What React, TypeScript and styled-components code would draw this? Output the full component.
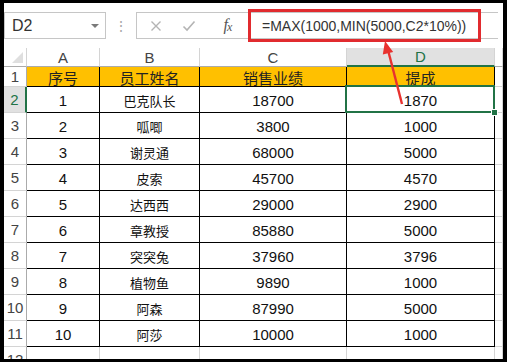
import React from "react";
import styled, { createGlobalStyle, css } from "styled-components";

const GlobalStyle = createGlobalStyle`
  html, body {
    margin: 0;
    padding: 0;
    background: #ffffff;
  }
  body {
    font-family: "Liberation Sans", "Noto Sans CJK SC", sans-serif;
  }
`;

const GREEN = "#217346";
const CJK = `"Noto Sans CJK SC", "Liberation Sans", sans-serif`;

const Frame = styled.div`
  position: relative;
  width: 507px;
  height: 362px;
  box-sizing: border-box;
  border-style: solid;
  border-color: #000;
  border-width: 3px 4px 3px 4px;
  background: #fff;
  overflow: hidden;
`;

const FormulaBar = styled.div`
  display: flex;
  align-items: center;
  height: 45px;
`;

const NameBox = styled.div`
  display: flex;
  align-items: center;
  justify-content: space-between;
  width: 102px;
  height: 27px;
  box-sizing: border-box;
  border: 1px solid #c6c6c6;
  padding: 0 6px 0 7px;
  font-size: 16px;
  color: #333;
`;

const Caret = styled.span`
  width: 0;
  height: 0;
  border-left: 4px solid transparent;
  border-right: 4px solid transparent;
  border-top: 4px solid #7a7a7a;
`;

const Dots = styled.span`
  width: 30px;
  text-align: center;
  font-size: 14px;
  color: #a8a8a8;
`;

const FormulaBox = styled.div`
  display: flex;
  align-items: center;
  width: 362px;
  height: 27px;
  box-sizing: border-box;
  border: 1px solid #c6c6c6;
  border-right: none;
  padding-left: 2px;
`;

const IconSlot = styled.span<{ $gap?: number }>`
  display: flex;
  align-items: center;
  justify-content: center;
  width: 33px;
  margin-left: ${(p) => p.$gap ?? 0}px;
  color: #b4b4b4;
`;

const Fx = styled.span`
  font-family: "Liberation Serif", serif;
  font-style: italic;
  font-size: 16px;
  color: #555;
  letter-spacing: -1px;
  sub {
    font-size: 12px;
    vertical-align: -1px;
  }
`;

const Highlight = styled.div`
  display: flex;
  align-items: center;
  margin-left: 4px;
  width: 233px;
  height: 33px;
  box-sizing: border-box;
  border: 3px solid #e12b2f;
  padding-left: 11px;
  font-size: 14px;
  color: #333;
  white-space: nowrap;
`;

const Sheet = styled.div`
  display: grid;
  grid-template-columns: 23px 73px 100px 147px 148px 1fr;
  grid-template-rows: 19px 20px repeat(11, 26px);
  height: 311px;
  overflow: hidden;
`;

const Corner = styled.div`
  position: relative;
  background: #fff;
  border-right: 1px solid #d4d4d4;
  border-bottom: 1px solid #ababab;
  &::after {
    content: "";
    position: absolute;
    right: 3px;
    bottom: 3px;
    width: 0;
    height: 0;
    border-left: 11px solid transparent;
    border-bottom: 11px solid #dfdfdf;
  }
`;

const ColHeader = styled.div<{ $selected?: boolean }>`
  display: flex;
  align-items: center;
  justify-content: center;
  box-sizing: border-box;
  font-size: 15px;
  color: #444;
  background: #fff;
  border-right: 1px solid #d4d4d4;
  border-bottom: 1px solid #ababab;
  ${(p) =>
    p.$selected &&
    css`
      background: #e1e1e1;
      color: ${GREEN};
      border-bottom: 2px solid ${GREEN};
    `}
`;

const RowHeader = styled.div<{ $selected?: boolean }>`
  display: flex;
  align-items: center;
  justify-content: center;
  box-sizing: border-box;
  font-size: 15px;
  color: #444;
  background: #fff;
  border-right: 1px solid #ababab;
  border-bottom: 1px solid #d4d4d4;
  ${(p) =>
    p.$selected &&
    css`
      background: #e1e1e1;
      color: ${GREEN};
      border-right: 2px solid ${GREEN};
    `}
`;

const Cell = styled.div<{ $head?: boolean; $cjk?: boolean; $active?: boolean }>`
  position: relative;
  display: flex;
  align-items: center;
  justify-content: center;
  box-sizing: border-box;
  border-right: 1px solid #000;
  border-bottom: 1px solid #000;
  font-size: 15px;
  color: #111;
  padding-top: 1px;
  white-space: nowrap;
  ${(p) =>
    p.$cjk &&
    css`
      font-family: ${CJK};
      font-size: 13px;
    `}
  ${(p) =>
    p.$head &&
    css`
      background: #ffc000;
      font-family: ${CJK};
      font-size: 15px;
      color: #222;
    `}
  ${(p) =>
    p.$active &&
    css`
      z-index: 2;
      &::after {
        content: "";
        position: absolute;
        top: -2px;
        left: -2px;
        right: -1px;
        bottom: -1px;
        border: 2px solid ${GREEN};
      }
      &::before {
        content: "";
        position: absolute;
        right: -4px;
        bottom: -4px;
        width: 5px;
        height: 5px;
        background: ${GREEN};
        border: 1px solid #fff;
        z-index: 3;
      }
    `}
`;

const Blank = styled.div`
  box-sizing: border-box;
  border-right: 1px solid #d4d4d4;
  border-bottom: 1px solid #d4d4d4;
`;

const Arrow = styled.svg`
  position: absolute;
  left: -4px;
  top: -3px;
  width: 509px;
  height: 364px;
  pointer-events: none;
  z-index: 5;
`;

const rows: [number, string, number, number][] = [
  [1, "巴克队长", 18700, 1870],
  [2, "呱唧", 3800, 1000],
  [3, "谢灵通", 68000, 5000],
  [4, "皮索", 45700, 4570],
  [5, "达西西", 29000, 2900],
  [6, "章教授", 85880, 5000],
  [7, "突突兔", 37960, 3796],
  [8, "植物鱼", 9890, 1000],
  [9, "阿森", 87990, 5000],
  [10, "阿莎", 10000, 1000],
];

const XIcon = () => (
  <svg width="12" height="12" viewBox="0 0 12 12">
    <path d="M1.5 1.5 L10.5 10.5 M10.5 1.5 L1.5 10.5" stroke="currentColor" strokeWidth="1.4" fill="none" />
  </svg>
);

const CheckIcon = () => (
  <svg width="14" height="12" viewBox="0 0 14 12">
    <path d="M1.5 6.5 L5 10 L12.5 1.5" stroke="currentColor" strokeWidth="1.6" fill="none" />
  </svg>
);

export default function App() {
  return (
    <>
      <GlobalStyle />
      <Frame>
        <FormulaBar>
          <NameBox>
            D2
            <Caret />
          </NameBox>
          <Dots>⋮</Dots>
          <FormulaBox>
            <IconSlot>
              <XIcon />
            </IconSlot>
            <IconSlot>
              <CheckIcon />
            </IconSlot>
            <IconSlot $gap={6}>
              <Fx>
                f<sub>x</sub>
              </Fx>
            </IconSlot>
            <Highlight>=MAX(1000,MIN(5000,C2*10%))</Highlight>
          </FormulaBox>
        </FormulaBar>

        <Sheet>
          <Corner />
          {["A", "B", "C", "D"].map((c) => (
            <ColHeader key={c} $selected={c === "D"}>
              {c}
            </ColHeader>
          ))}
          <ColHeader />

          <RowHeader>1</RowHeader>
          <Cell $head>序号</Cell>
          <Cell $head>员工姓名</Cell>
          <Cell $head>销售业绩</Cell>
          <Cell $head>提成</Cell>
          <Blank />

          {rows.map(([no, name, sales, bonus], i) => (
            <React.Fragment key={no}>
              <RowHeader $selected={i === 0}>{i + 2}</RowHeader>
              <Cell>{no}</Cell>
              <Cell $cjk>{name}</Cell>
              <Cell>{sales}</Cell>
              <Cell $active={i === 0}>{bonus}</Cell>
              <Blank />
            </React.Fragment>
          ))}

          <RowHeader>12</RowHeader>
          <Blank />
          <Blank />
          <Blank />
          <Blank />
          <Blank />
        </Sheet>

        <Arrow viewBox="0 0 509 364">
          <line x1="402" y1="104" x2="388" y2="50" stroke="#e8322f" strokeWidth="2.4" />
          <polygon points="385,41 393.2,52 382.8,54.6" fill="#e8322f" />
        </Arrow>
      </Frame>
    </>
  );
}
